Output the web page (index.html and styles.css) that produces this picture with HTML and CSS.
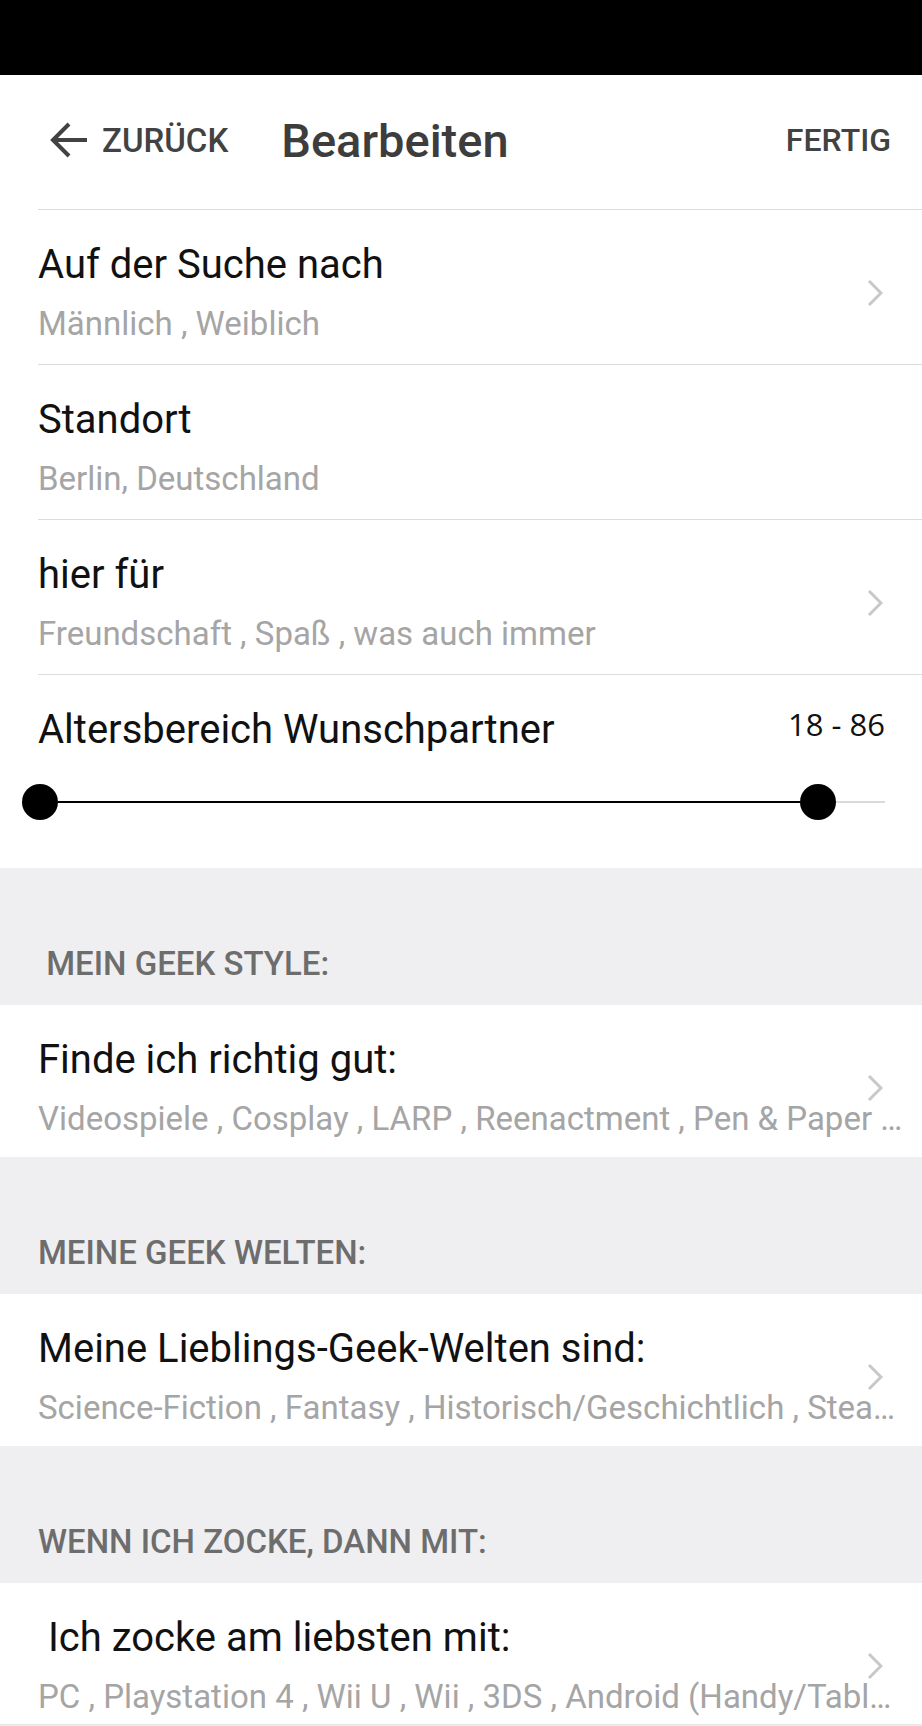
FILE: index.html
```html
<!DOCTYPE html>
<html lang="de">
<head>
<meta charset="utf-8">
<title>Bearbeiten</title>
<link rel="stylesheet" href="styles.css">
</head>
<body>
<div class="statusbar"></div>
<header class="topbar">
  <button class="back">
    <svg class="back-icon" width="38" height="36" viewBox="0 0 38 36" aria-hidden="true">
      <path d="M37 18H4M19 2L3 18L19 34" fill="none" stroke="#424242" stroke-width="4"/>
    </svg>
    <span>ZURÜCK</span>
  </button>
  <h1 class="title">Bearbeiten</h1>
  <button class="done">FERTIG</button>
</header>

<section class="card">
  <div class="row sep">
    <div class="row-title">Auf der Suche nach</div>
    <svg class="chev" width="16" height="28" viewBox="0 0 16 28" aria-hidden="true"><path d="M2 2L14 14L2 26" fill="none" stroke="#c8c8c8" stroke-width="3"/></svg>
    <div class="row-sub">Männlich , Weiblich</div>
  </div>
  <div class="row sep">
    <div class="row-title">Standort</div>
    <div class="row-sub">Berlin, Deutschland</div>
  </div>
  <div class="row sep">
    <div class="row-title">hier für</div>
    <svg class="chev" width="16" height="28" viewBox="0 0 16 28" aria-hidden="true"><path d="M2 2L14 14L2 26" fill="none" stroke="#c8c8c8" stroke-width="3"/></svg>
    <div class="row-sub">Freundschaft , Spaß , was auch immer</div>
  </div>
  <div class="age sep">
    <div class="age-head">
      <div class="row-title">Altersbereich Wunschpartner</div>
      <div class="age-value">18 - 86</div>
    </div>
    <div class="slider">
      <span class="thumb"></span>
      <span class="track-on"></span>
      <span class="thumb"></span>
      <span class="track-off"></span>
    </div>
  </div>
</section>

<div class="group-label">&nbsp;MEIN GEEK STYLE:</div>
<section class="card">
  <div class="row">
    <div class="row-title">Finde ich richtig gut:</div>
    <svg class="chev" width="16" height="28" viewBox="0 0 16 28" aria-hidden="true"><path d="M2 2L14 14L2 26" fill="none" stroke="#c8c8c8" stroke-width="3"/></svg>
    <div class="row-sub">Videospiele , Cosplay , LARP , Reenactment , Pen &amp; Paper …</div>
  </div>
</section>

<div class="group-label">MEINE GEEK WELTEN:</div>
<section class="card">
  <div class="row">
    <div class="row-title">Meine Lieblings-Geek-Welten sind:</div>
    <svg class="chev" width="16" height="28" viewBox="0 0 16 28" aria-hidden="true"><path d="M2 2L14 14L2 26" fill="none" stroke="#c8c8c8" stroke-width="3"/></svg>
    <div class="row-sub">Science-Fiction , Fantasy , Historisch/Geschichtlich , Stea…</div>
  </div>
</section>

<div class="group-label">WENN ICH ZOCKE, DANN MIT:</div>
<section class="card">
  <div class="row row-last">
    <div class="row-title">&nbsp;Ich zocke am liebsten mit:</div>
    <svg class="chev" width="16" height="28" viewBox="0 0 16 28" aria-hidden="true"><path d="M2 2L14 14L2 26" fill="none" stroke="#c8c8c8" stroke-width="3"/></svg>
    <div class="row-sub">PC , Playstation 4 , Wii U , Wii , 3DS , Android (Handy/Tabl…</div>
  </div>
</section>
<div class="group-end"></div>
</body>
</html>
```
FILE: styles.css
```css
* { box-sizing: border-box; }

html, body {
  margin: 0;
  padding: 0;
  background: #efeff1;
  font-family: Roboto, "Liberation Sans", Arial, sans-serif;
  overflow: hidden;
}

.statusbar {
  height: 75px;
  background: #000;
}

.topbar {
  height: 134px;
  background: #fff;
  display: flex;
  align-items: center;
  padding: 0 31px 4px 50px;
  color: #424242;
}

.back {
  display: flex;
  align-items: center;
  gap: 14px;
  border: 0;
  background: none;
  padding: 0;
  font: 500 33px/1 Roboto, "Liberation Sans", sans-serif;
  color: #424242;
}

.back-icon { display: block; }

.title {
  margin: 0 0 0 53px;
  font: 500 47px/1 Roboto, "Liberation Sans", sans-serif;
  color: #3d3d3d;
}

.done {
  margin-left: auto;
  border: 0;
  background: none;
  padding: 0;
  font: 500 32px/1 Roboto, "Liberation Sans", sans-serif;
  color: #424242;
}

.card {
  background: #fff;
}

.sep {
  border-top: 1px solid #dcdcdc;
  margin-left: 38px;
}

.row {
  display: grid;
  grid-template-columns: 1fr auto;
  grid-template-rows: 46px 40px;
  row-gap: 16px;
  align-items: center;
  padding: 32px 15px 18px 38px;
}

.row.sep {
  padding-left: 0;
  padding-bottom: 20px;
}

.row-title {
  grid-column: 1;
  grid-row: 1;
  font-size: 40px;
  line-height: 46px;
  color: #111;
  white-space: nowrap;
}

.row-sub {
  grid-column: 1 / -1;
  grid-row: 2;
  font-size: 33px;
  line-height: 40px;
  color: #a5a5a5;
  white-space: nowrap;
  overflow: hidden;
  text-overflow: ellipsis;
}

.chev {
  grid-column: 2;
  grid-row: 1 / 3;
  align-self: center;
  margin: 0 24px 0 0;
  display: block;
}

.row-last {
  padding-bottom: 7px;
}

.age {
  padding: 32px 0 48px 0;
}

.age-head {
  display: flex;
  align-items: center;
  justify-content: space-between;
  padding-right: 37px;
}

.age-value {
  font-family: "Open Sans", "Noto Sans", sans-serif;
  font-size: 31px;
  line-height: 40px;
  color: #111;
  margin-top: -13px;
}

.slider {
  display: flex;
  align-items: center;
  margin: 31px 37px 0 -16px;
  height: 36px;
}

.thumb {
  width: 36px;
  height: 36px;
  border-radius: 50%;
  background: #000;
  flex: none;
}

.track-on {
  flex: 1;
  height: 2px;
  background: #000;
}

.track-off {
  width: 49px;
  height: 2px;
  background: #dadada;
  flex: none;
}

.group-label {
  height: 137px;
  padding: 76px 0 0 38px;
  font-size: 33px;
  font-weight: 500;
  line-height: 40px;
  color: #6d6d6d;
  white-space: nowrap;
}

.group-end {
  height: 20px;
  border-top: 1px solid #e6e6e6;
}
```
